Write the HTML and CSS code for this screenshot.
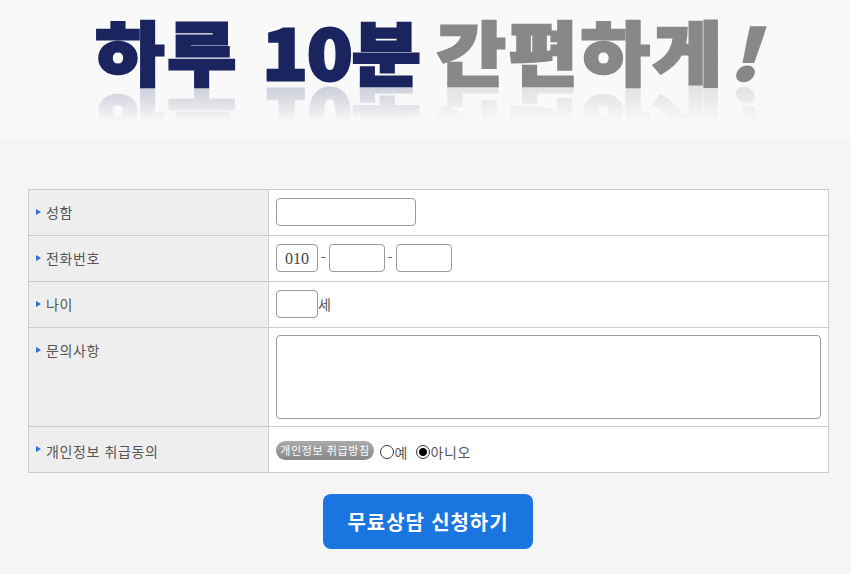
FILE: index.html
```html
<!DOCTYPE html>
<html lang="ko">
<head>
  <meta charset="UTF-8">
  <meta name="viewport" content="width=device-width, initial-scale=1.0">
  <title>무료상담 신청</title>
  <link rel="stylesheet" href="styles.css">
</head>
<body>
  <div class="hero">
    <h1 class="hero-title"><span class="navy">하루 <span class="digits">10</span>분</span> <span class="gray">간편하게<em>!</em></span></h1>
  </div>
  <form class="consult">
    <table class="form-table">
      <tr>
        <th><i class="arrow"></i>성함</th>
        <td><input type="text" class="field name"></td>
      </tr>
      <tr>
        <th><i class="arrow"></i>전화번호</th>
        <td><input type="text" class="field tel-first" value="010"><span class="dash">-</span><input type="text" class="field tel"><span class="dash">-</span><input type="text" class="field tel"></td>
      </tr>
      <tr>
        <th><i class="arrow"></i>나이</th>
        <td><input type="text" class="field age"><span class="unit">세</span></td>
      </tr>
      <tr class="tall">
        <th><i class="arrow"></i>문의사항</th>
        <td><textarea class="field memo"></textarea></td>
      </tr>
      <tr>
        <th class="agree-label"><i class="arrow"></i>개인정보 취급동의</th>
        <td class="agree">
          <a class="policy">개인정보 취급방침</a>
          <label class="choice"><input type="radio" name="agree">예</label>
          <label class="choice"><input type="radio" name="agree" checked>아니오</label>
        </td>
      </tr>
    </table>
    <div class="actions">
      <button type="button" class="submit">무료상담 신청하기</button>
    </div>
  </form>
</body>
</html>
```

FILE: styles.css
```css
* {
  box-sizing: border-box;
}
body {
  margin: 0;
  background: #f5f5f5;
  color: #555;
  font-family: "Noto Sans CJK KR", "Noto Sans", sans-serif;
  font-size: 14px;
}
.hero {
  height: 139px;
  background: #f9f9f9;
  padding-top: 10px;
  text-align: center;
}
.hero-title {
  margin: 0;
  font-size: 75px;
  line-height: 88px;
  font-weight: 900;
  letter-spacing: 3px;
  word-spacing: -1px;
  white-space: nowrap;
  stroke-linejoin: round;
  -webkit-text-stroke: 3px currentColor;
  -webkit-box-reflect: below -14px linear-gradient(transparent 45%, rgba(255, 255, 255, .25));
  transform: scaleY(.92);
  transform-origin: top;
}
.navy {
  color: #1a2560;
  margin-left: 6px;
}
.digits {
  letter-spacing: -1px;
}
.gray {
  color: #888;
  margin-left: -10px;
}
.gray em {
  font-style: italic;
  margin-left: 4px;
}
.consult {
  padding: 50px 23px 0 28px;
}
.form-table {
  width: 801px;
  border-collapse: collapse;
  table-layout: fixed;
  background: #fff;
}
.form-table th,
.form-table td {
  height: 46px;
  border: 1px solid #ccc;
  padding: 0 7px 2px;
  font-weight: 400;
  text-align: left;
  vertical-align: middle;
  letter-spacing: .6px;
}
.form-table th {
  width: 240px;
  background: #eee;
}
.form-table .tall th,
.form-table .tall td {
  height: 99px;
  padding-bottom: 0;
}
.form-table .tall th {
  vertical-align: top;
  padding-top: 12px;
}
.form-table .agree-label {
  padding-bottom: 0;
  padding-top: 3px;
}
.arrow {
  display: inline-block;
  width: 0;
  height: 0;
  margin-right: 5px;
  vertical-align: 3px;
  border-left: 5px solid #2f6fd8;
  border-top: 3px solid transparent;
  border-bottom: 3px solid transparent;
}
.agree-label .arrow {
  vertical-align: 5px;
}
.field {
  height: 28px;
  padding: 2px 8px 0;
  border: 1px solid #999;
  border-radius: 4px;
  background: #fff;
  color: #444;
  font-family: "Liberation Serif", serif;
  font-size: 16px;
  letter-spacing: 0;
  vertical-align: middle;
}
.name {
  width: 140px;
}
.tel-first,
.age {
  width: 42px;
}
.tel {
  width: 56px;
}
.dash {
  display: inline-block;
  width: 11px;
  text-align: center;
  vertical-align: -2px;
}
.unit {
  vertical-align: -2px;
}
.memo {
  display: block;
  width: 545px;
  height: 84px;
  resize: none;
}
.agree {
  white-space: nowrap;
}
.form-table .agree {
  padding-bottom: 0;
  padding-top: 3px;
}
.policy {
  display: inline-block;
  height: 19px;
  width: 98px;
  border-radius: 10px;
  background: linear-gradient(#aaa, #888);
  color: #fff;
  font-size: 11px;
  line-height: 18px;
  letter-spacing: .6px;
  text-align: center;
  vertical-align: middle;
  margin-top: -4px;
}
.choice {
  display: inline-flex;
  align-items: center;
  vertical-align: middle;
  margin-left: 1px;
  margin-right: 2px;
}
.choice input {
  appearance: none;
  width: 14px;
  height: 14px;
  margin: 0 1px 0 0;
  border: 1px solid #333;
  border-radius: 50%;
  background: #fff;
}
.choice input:checked {
  background: radial-gradient(circle, #000 0 3.5px, #fff 4.5px);
}
.actions {
  padding-top: 21px;
  text-align: center;
}
.submit {
  width: 210px;
  height: 55px;
  border: 0;
  border-radius: 8px;
  background: #1a75e0;
  color: #fff;
  font-family: inherit;
  font-size: 20px;
  font-weight: 700;
  letter-spacing: .9px;
}
```
